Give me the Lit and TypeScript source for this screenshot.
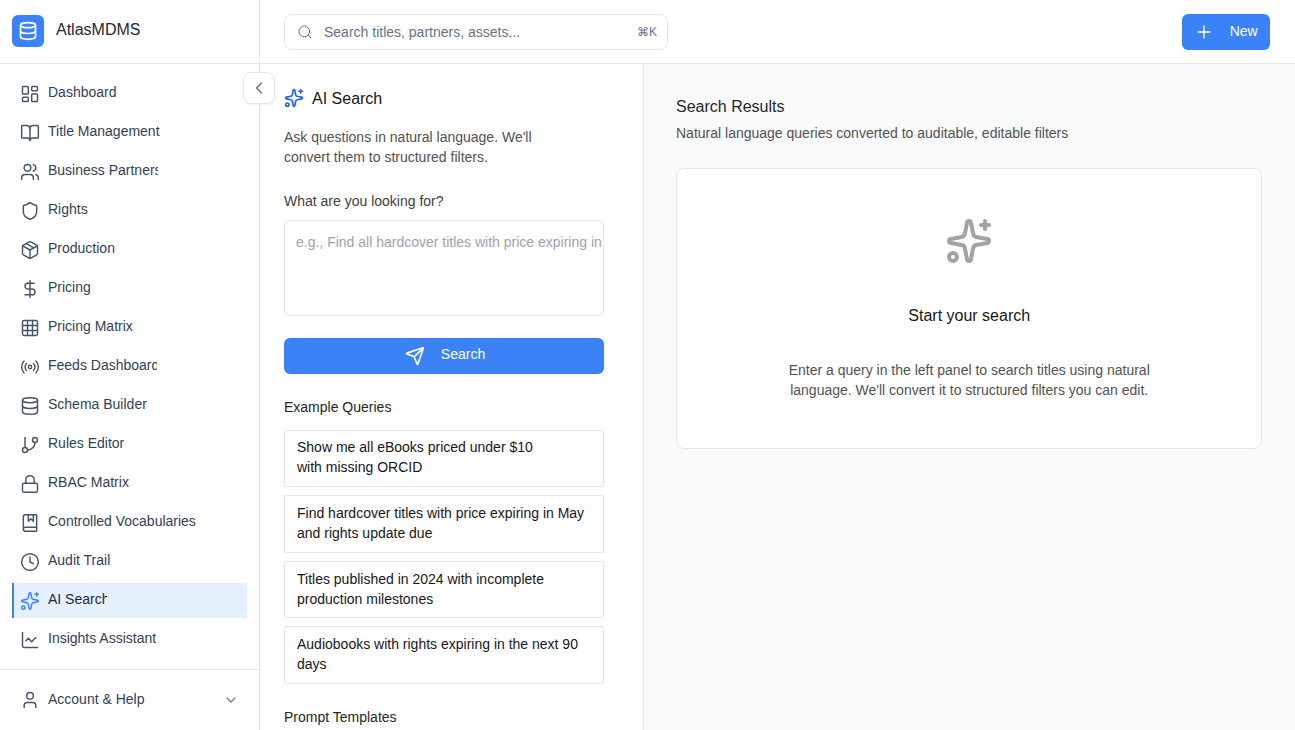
import { LitElement, html, css, svg } from 'lit';
import { customElement } from 'lit/decorators.js';

const sparkles = svg`<path d="M11.017 2.814a1 1 0 0 1 1.966 0l1.051 5.558a2 2 0 0 0 1.594 1.594l5.558 1.051a1 1 0 0 1 0 1.966l-5.558 1.051a2 2 0 0 0-1.594 1.594l-1.051 5.558a1 1 0 0 1-1.966 0l-1.051-5.558a2 2 0 0 0-1.594-1.594l-5.558-1.051a1 1 0 0 1 0-1.966l5.558-1.051a2 2 0 0 0 1.594-1.594z"/><path d="M20 2v4"/><path d="M22 4h-4"/><circle cx="4" cy="20" r="2"/>`;
const database = svg`<ellipse cx="12" cy="5" rx="9" ry="3"/><path d="M3 5V19A9 3 0 0 0 21 19V5"/><path d="M3 12A9 3 0 0 0 21 12"/>`;

const icons = {
  dashboard: svg`<rect width="7" height="9" x="3" y="3" rx="1"/><rect width="7" height="5" x="14" y="3" rx="1"/><rect width="7" height="9" x="14" y="12" rx="1"/><rect width="7" height="5" x="3" y="16" rx="1"/>`,
  book: svg`<path d="M12 7v14"/><path d="M3 18a1 1 0 0 1-1-1V4a1 1 0 0 1 1-1h5a4 4 0 0 1 4 4 4 4 0 0 1 4-4h5a1 1 0 0 1 1 1v13a1 1 0 0 1-1 1h-6a3 3 0 0 0-3 3 3 3 0 0 0-3-3z"/>`,
  users: svg`<path d="M16 21v-2a4 4 0 0 0-4-4H6a4 4 0 0 0-4 4v2"/><circle cx="9" cy="7" r="4"/><path d="M22 21v-2a4 4 0 0 0-3-3.87"/><path d="M16 3.13a4 4 0 0 1 0 7.75"/>`,
  shield: svg`<path d="M20 13c0 5-3.5 7.5-7.66 8.95a1 1 0 0 1-.67-.01C7.5 20.5 4 18 4 13V6a1 1 0 0 1 1-1c2 0 4.5-1.2 6.24-2.72a1.17 1.17 0 0 1 1.52 0C14.51 3.81 17 5 19 5a1 1 0 0 1 1 1z"/>`,
  package: svg`<path d="M11 21.73a2 2 0 0 0 2 0l7-4A2 2 0 0 0 21 16V8a2 2 0 0 0-1-1.73l-7-4a2 2 0 0 0-2 0l-7 4A2 2 0 0 0 3 8v8a2 2 0 0 0 1 1.73z"/><path d="M12 22V12"/><path d="m3.3 7 8.7 5 8.7-5"/><path d="m7.5 4.27 9 5.15"/>`,
  dollar: svg`<line x1="12" x2="12" y1="2" y2="22"/><path d="M17 5H9.5a3.5 3.5 0 0 0 0 7h5a3.5 3.5 0 0 1 0 7H6"/>`,
  grid: svg`<rect width="18" height="18" x="3" y="3" rx="2"/><path d="M3 9h18"/><path d="M3 15h18"/><path d="M9 3v18"/><path d="M15 3v18"/>`,
  radio: svg`<path d="M4.9 19.1C1 15.2 1 8.8 4.9 4.9"/><path d="M7.8 16.2c-2.3-2.3-2.3-6.1 0-8.5"/><circle cx="12" cy="12" r="2"/><path d="M16.2 7.8c2.3 2.3 2.3 6.1 0 8.5"/><path d="M19.1 4.9C23 8.8 23 15.1 19.1 19"/>`,
  database,
  branch: svg`<line x1="6" x2="6" y1="3" y2="15"/><circle cx="18" cy="6" r="3"/><circle cx="6" cy="18" r="3"/><path d="M18 9a9 9 0 0 1-9 9"/>`,
  lock: svg`<rect width="18" height="11" x="3" y="11" rx="2"/><path d="M7 11V7a5 5 0 0 1 10 0v4"/>`,
  bookMarked: svg`<path d="M10 2v8l3-3 3 3V2"/><path d="M4 19.5v-15A2.5 2.5 0 0 1 6.5 2H19a1 1 0 0 1 1 1v18a1 1 0 0 1-1 1H6.5a1 1 0 0 1 0-5H20"/>`,
  clock: svg`<circle cx="12" cy="12" r="10"/><polyline points="12 6 12 12 16 14"/>`,
  sparkles,
  chart: svg`<path d="M3 3v16a2 2 0 0 0 2 2h16"/><path d="m19 9-5 5-4-4-3 3"/>`,
  user: svg`<path d="M19 21v-2a4 4 0 0 0-4-4H9a4 4 0 0 0-4 4v2"/><circle cx="12" cy="7" r="4"/>`,
  search: svg`<path d="m21 21-4.34-4.34"/><circle cx="11" cy="11" r="8"/>`,
  send: svg`<path d="M14.536 21.686a.5.5 0 0 0 .937-.024l6.5-19a.496.496 0 0 0-.635-.635l-19 6.5a.5.5 0 0 0-.024.937l7.93 3.18a2 2 0 0 1 1.112 1.11z"/><path d="m21.854 2.147-10.94 10.939"/>`,
  plus: svg`<path d="M5 12h14"/><path d="M12 5v14"/>`,
  chevronLeft: svg`<path d="m15 18-6-6 6-6"/>`,
  chevronDown: svg`<path d="m6 9 6 6 6-6"/>`,
};

type IconName = keyof typeof icons;

const icon = (name: IconName, size = 20, width = 1.75) => html`
  <svg class="icon" width=${size} height=${size} viewBox="0 0 24 24" fill="none" stroke="currentColor"
    stroke-width=${width} stroke-linecap="round" stroke-linejoin="round">${icons[name]}</svg>`;

// clip = width of the label box where the text gets cut off
const navItems: { label: string; icon: IconName; clip?: number; active?: boolean }[] = [
  { label: 'Dashboard', icon: 'dashboard' },
  { label: 'Title Management', icon: 'book', clip: 112 },
  { label: 'Business Partners', icon: 'users', clip: 110 },
  { label: 'Rights', icon: 'shield' },
  { label: 'Production', icon: 'package' },
  { label: 'Pricing', icon: 'dollar' },
  { label: 'Pricing Matrix', icon: 'grid' },
  { label: 'Feeds Dashboard', icon: 'radio', clip: 109 },
  { label: 'Schema Builder', icon: 'database' },
  { label: 'Rules Editor', icon: 'branch' },
  { label: 'RBAC Matrix', icon: 'lock' },
  { label: 'Controlled Vocabularies', icon: 'bookMarked' },
  { label: 'Audit Trail', icon: 'clock' },
  { label: 'AI Search', icon: 'sparkles', clip: 59, active: true },
  { label: 'Insights Assistant', icon: 'chart' },
];

const examples = [
  ['Show me all eBooks priced under $10', 'with missing ORCID'],
  ['Find hardcover titles with price expiring in May', 'and rights update due'],
  ['Titles published in 2024 with incomplete', 'production milestones'],
  ['Audiobooks with rights expiring in the next 90', 'days'],
];

@customElement('app-root')
export class AppRoot extends LitElement {
  static styles = css`
    :host {
      display: flex;
      height: 730px;
      overflow: hidden;
      position: relative;
      background: #fff;
      color: #171717;
      font-family: 'Liberation Sans', Arial, sans-serif;
      font-size: 14px;
      line-height: 20px;
    }
    .icon {
      flex: none;
      display: block;
    }

    .sidebar {
      width: 260px;
      flex: none;
      display: flex;
      flex-direction: column;
      box-sizing: border-box;
      border-right: 1px solid #e5e7eb;
    }
    .brand {
      height: 64px;
      flex: none;
      box-sizing: border-box;
      display: flex;
      align-items: center;
      gap: 12px;
      padding: 0 12px 2px;
      border-bottom: 1px solid #e5e7eb;
      font-size: 16px;
      color: #1f2937;
    }
    .brand span {
      margin-bottom: 2px;
    }
    .logo {
      width: 32px;
      height: 32px;
      border-radius: 6px;
      background: #3b82f6;
      color: #fff;
      display: flex;
      align-items: center;
      justify-content: center;
    }
    .nav {
      flex: 1;
      display: flex;
      flex-direction: column;
      gap: 4px;
      padding: 12px;
    }
    .item {
      height: 35px;
      box-sizing: border-box;
      display: flex;
      align-items: center;
      gap: 8px;
      padding-left: 8px;
      color: #334155;
    }
    .item .icon {
      color: #475569;
    }
    .item.active {
      background: #e6f0fd;
      border-left: 2px solid #3b82f6;
      padding-left: 6px;
      color: #1e293b;
    }
    .item.active .icon {
      color: #3b82f6;
    }
    .label {
      overflow: hidden;
      white-space: nowrap;
      margin-bottom: 3px;
    }
    .foot {
      flex: none;
      border-top: 1px solid #e5e7eb;
      padding: 12px 12px 13px;
    }
    .foot .item {
      padding-right: 8px;
    }
    .foot .label {
      flex: 1;
      margin-bottom: 1px;
    }
    .foot .chev .icon {
      color: #64748b;
    }
    .collapse {
      position: absolute;
      left: 243px;
      top: 72px;
      width: 32px;
      height: 32px;
      box-sizing: border-box;
      border: 1px solid #e5e7eb;
      border-radius: 8px;
      background: #fff;
      box-shadow: 0 1px 2px rgba(0, 0, 0, 0.05);
      color: #64748b;
      display: flex;
      align-items: center;
      justify-content: center;
    }

    .main {
      flex: 1;
      min-width: 0;
      display: flex;
      flex-direction: column;
    }
    .top {
      height: 64px;
      flex: none;
      box-sizing: border-box;
      display: flex;
      align-items: center;
      justify-content: space-between;
      padding: 0 24.7px 0 24px;
      border-bottom: 1px solid #e5e7eb;
    }
    .global {
      width: 384px;
      height: 36px;
      box-sizing: border-box;
      display: flex;
      align-items: center;
      gap: 11px;
      padding: 0 10px 0 12px;
      border: 1px solid #e5e7eb;
      border-radius: 8px;
      color: #64748b;
    }
    .global span:first-of-type {
      flex: 1;
    }
    .kbd {
      font-size: 12px;
    }
    .new {
      width: 88.6px;
      height: 36px;
      box-sizing: border-box;
      display: flex;
      align-items: center;
      gap: 16px;
      padding-left: 12px;
      border-radius: 6px;
      background: #3b82f6;
      color: #fff;
    }
    .new span {
      margin-bottom: 2px;
    }

    .body {
      flex: 1;
      min-height: 0;
      display: flex;
    }
    .left {
      width: 384px;
      flex: none;
      box-sizing: border-box;
      padding: 24px 39px 0 24px;
      border-right: 1px solid #e5e7eb;
      overflow: hidden;
    }
    .title {
      height: 20px;
      display: flex;
      align-items: center;
      gap: 8px;
      font-size: 16px;
      color: #171717;
    }
    .title span {
      margin-top: 2px;
    }
    .title .icon {
      color: #2563eb;
    }
    .desc {
      margin: 19px 0 0;
      color: #525252;
    }
    .field {
      margin-top: 24px;
      color: #404040;
    }
    .textarea {
      height: 96px;
      box-sizing: border-box;
      margin-top: 9px;
      padding: 11px 0 0 11px;
      border: 1px solid #e5e7eb;
      border-radius: 4px;
      color: #9ca3af;
      white-space: nowrap;
      overflow: hidden;
    }
    .search {
      height: 36px;
      margin-top: 21.5px;
      padding-left: 2px;
      display: flex;
      align-items: center;
      justify-content: center;
      gap: 16px;
      border-radius: 6px;
      background: #3b82f6;
      color: #fff;
    }
    .search span {
      margin-bottom: 3px;
    }
    .section {
      margin-top: 23px;
      color: #262626;
    }
    .cards {
      margin-top: 13px;
      display: flex;
      flex-direction: column;
      gap: 8px;
    }
    .card {
      height: 57.67px;
      box-sizing: border-box;
      padding: 6.7px 12px 0;
      border: 1px solid #e5e7eb;
      border-radius: 2px;
      color: #171717;
    }
    .templates {
      margin-top: 23px;
      color: #262626;
    }

    .right {
      flex: 1;
      min-width: 0;
      box-sizing: border-box;
      padding: 32px 32.6px 0 32px;
      background: #f9fafb;
    }
    .right h2 {
      margin: 0;
      font-size: 16px;
      font-weight: 400;
      line-height: 22px;
      color: #262626;
    }
    .right p {
      margin: 5px 0 0;
      color: #525252;
    }
    .empty {
      height: 281px;
      box-sizing: border-box;
      margin-top: 25px;
      padding-top: 48px;
      display: flex;
      flex-direction: column;
      align-items: center;
      background: #fff;
      border: 1px solid #e5e7eb;
      border-radius: 8px;
    }
    .empty .icon {
      color: #a3a3a3;
    }
    .empty h3 {
      margin: 40px 0 0;
      font-size: 16px;
      font-weight: 400;
      line-height: 22px;
      color: #171717;
    }
    .empty div {
      margin-top: 33px;
      text-align: center;
      color: #525252;
    }
  `;

  render() {
    return html`
      <aside class="sidebar">
        <div class="brand">
          <div class="logo">${icon('database', 20, 2)}</div>
          <span>AtlasMDMS</span>
        </div>
        <nav class="nav">
          ${navItems.map(
            (n) => html`
              <div class="item ${n.active ? 'active' : ''}">
                ${icon(n.icon)}
                <span class="label" style=${n.clip ? `width:${n.clip}px` : ''}>${n.label}</span>
              </div>
            `
          )}
        </nav>
        <div class="foot">
          <div class="item">
            ${icon('user')}
            <span class="label">Account &amp; Help</span>
            <span class="chev">${icon('chevronDown', 16)}</span>
          </div>
        </div>
      </aside>
      <div class="collapse">${icon('chevronLeft', 20)}</div>

      <div class="main">
        <header class="top">
          <div class="global">
            ${icon('search', 16, 1.5)}
            <span>Search titles, partners, assets...</span>
            <span class="kbd">⌘K</span>
          </div>
          <div class="new">${icon('plus')}<span>New</span></div>
        </header>
        <div class="body">
          <section class="left">
            <div class="title">${icon('sparkles', 20, 2)}<span>AI Search</span></div>
            <p class="desc">Ask questions in natural language. We'll<br />convert them to structured filters.</p>
            <div class="field">What are you looking for?</div>
            <div class="textarea">e.g., Find all hardcover titles with price expiring in</div>
            <div class="search">${icon('send', 20, 2)}<span>Search</span></div>
            <div class="section">Example Queries</div>
            <div class="cards">
              ${examples.map((e) => html`<div class="card">${e[0]}<br />${e[1]}</div>`)}
            </div>
            <div class="templates">Prompt Templates</div>
          </section>
          <section class="right">
            <h2>Search Results</h2>
            <p>Natural language queries converted to auditable, editable filters</p>
            <div class="empty">
              ${icon('sparkles', 48, 2)}
              <h3>Start your search</h3>
              <div>
                Enter a query in the left panel to search titles using natural<br />
                language. We'll convert it to structured filters you can edit.
              </div>
            </div>
          </section>
        </div>
      </div>
    `;
  }
}
